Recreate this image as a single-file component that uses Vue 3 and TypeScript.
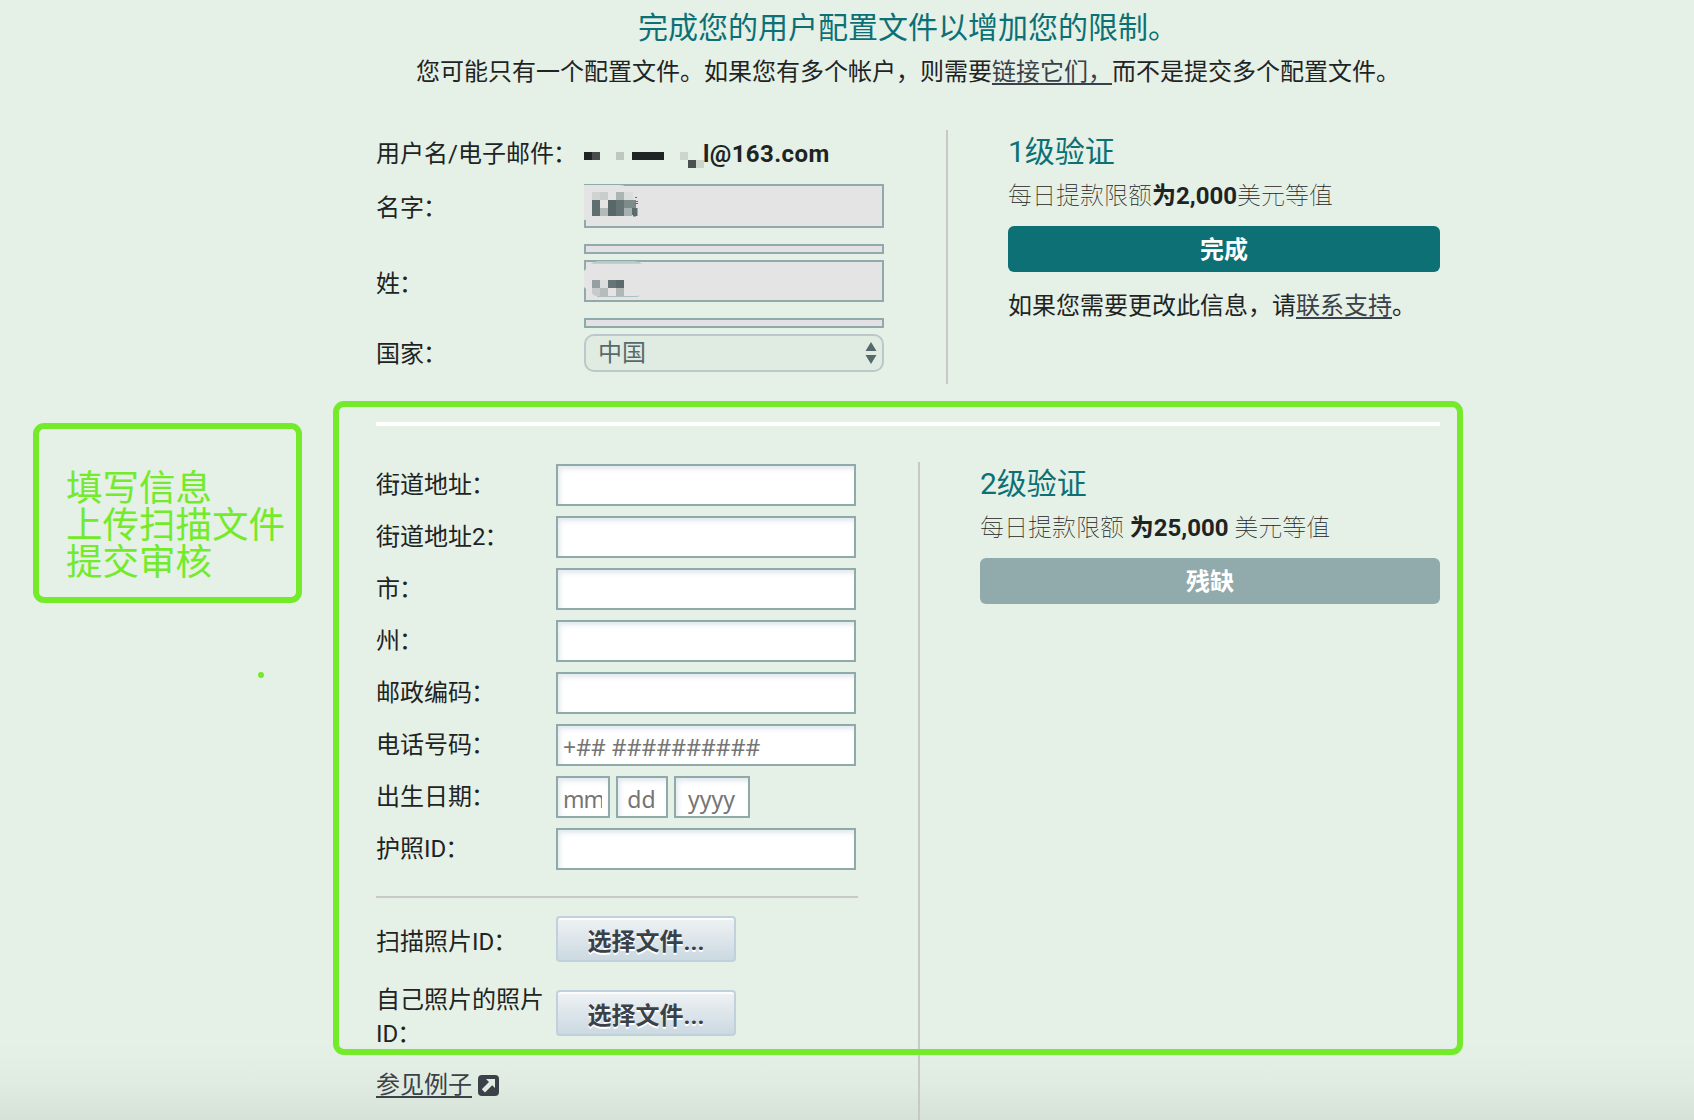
<script setup lang="ts">
interface Block {
  x: number
  y: number
  w: number
  h: number
  c: string
}

const b = (x: number, y: number, w: number, h: number, c: string): Block => ({ x, y, w, h, c })

// Redaction mosaics, relative to the value column and its row
const emailMask: Block[] = [
  b(0, 8, 8, 8, '#1e2424'), b(8, 8, 8, 8, '#484c4b'), b(32, 8, 8, 8, '#bec8c0'),
  b(48, 8, 32, 8, '#1e2424'), b(96, 8, 8, 8, '#ccd6ce'),
  b(104, 16, 8, 8, '#4a504d'), b(112, 16, 8, 8, '#ccd5cc'),
]
const firstMask: Block[] = [
  b(8, 8, 8, 8, '#d0d3d2'), b(16, 8, 8, 8, '#c9cdcc'), b(32, 8, 8, 8, '#adb4b4'), b(40, 8, 9, 8, '#dadddc'),
  b(8, 16, 8, 16, '#5f6f70'), b(24, 16, 8, 16, '#586869'), b(32, 16, 8, 16, '#657576'),
  b(40, 16, 12, 8, '#7e8b8b'), b(16, 24, 8, 8, '#b3bbba'), b(40, 24, 8, 8, '#a6b0b0'),
  b(48, 24, 4, 7, '#5c6c6e'), b(51, 13, 2, 1, '#5c6c6e'), b(52, 17, 2, 1, '#5c6c6e'),
  b(51, 19, 3, 1, '#5c6c6e'), b(52, 24, 1.5, 8, '#5c6c6e'), b(49, 31, 3, 1.5, '#5c6c6e'),
]
const lastMask: Block[] = [
  b(8, 20, 8, 8, '#97a0a0'), b(16, 20, 8, 8, '#dcdddd'), b(24, 20, 8, 8, '#667677'), b(32, 20, 8, 8, '#5c6c6e'),
  b(16, 28, 8, 8, '#b6bbbb'), b(32, 28, 8, 8, '#b0b7b6'),
]

const fields: string[] = ['街道地址', '街道地址2', '市', '州', '邮政编码']
const dateParts = [
  { hint: 'mm', cls: 'mm' },
  { hint: 'dd', cls: 'dd' },
  { hint: 'yyyy', cls: 'yyyy' },
]
</script>

<template>
  <div class="page">
    <main class="content">
      <header>
        <h1>完成您的用户配置文件以增加您的限制。</h1>
        <p class="intro">您可能只有一个配置文件。如果您有多个帐户，则需要<a>链接它们，</a>而不是提交多个配置文件。</p>
      </header>

      <section class="tier one">
        <div class="form">
          <div class="row email">
            <label>用户名/电子邮件<span class="colon">：</span></label>
            <div class="value">
              <b>l@163.com</b>
              <svg class="mask" width="124" height="28"><rect v-for="(m, i) in emailMask" :key="i" :x="m.x" :y="m.y" :width="m.w" :height="m.h" :fill="m.c" /></svg>
            </div>
          </div>
          <div class="row first">
            <label>名字<span class="colon">：</span></label>
            <div class="value">
              <div class="locked"></div>
              <svg class="mask" width="60" height="44">
                <path d="M0 1H36Q40 1 42 3V7H2V36H0Z" fill="#e4e4e4" />
                <rect v-for="(m, i) in firstMask" :key="i" :x="m.x" :y="m.y" :width="m.w" :height="m.h" :fill="m.c" />
              </svg>
            </div>
          </div>
          <div class="thin"></div>
          <div class="row last">
            <label>姓<span class="colon">：</span></label>
            <div class="value">
              <div class="locked"></div>
              <svg class="mask" width="64" height="42">
                <path d="M0 11Q2 9 2 9V29Q1 28 0 27Z" fill="#e4e4e4" />
                <path d="M7 3.7Q10 1 15 1H50Q55 1 58 3.7Z" fill="#b6cbc3" />
                <path d="M8 28H16V36H13Q9 36 8 33Z" fill="#c6cacb" />
                <path d="M13 36.5H50Q54 36.5 55 36" stroke="#afbfbf" fill="none" />
                <rect v-for="(m, i) in lastMask" :key="i" :x="m.x" :y="m.y" :width="m.w" :height="m.h" :fill="m.c" />
              </svg>
            </div>
          </div>
          <div class="thin second"></div>
          <div class="row country">
            <label>国家<span class="colon">：</span></label>
            <div class="select">
              <span>中国</span>
              <svg width="12" height="22"><path d="M6 0L11.5 9H.5ZM6 22L.5 13H11.5Z" fill="#58696b" /></svg>
            </div>
          </div>
        </div>
        <aside>
          <h2>1级验证</h2>
          <p class="limit">每日提款限额<b>为2,000</b>美元等值</p>
          <div class="status done">完成</div>
          <p class="note">如果您需要更改此信息，请<a>联系支持</a>。</p>
        </aside>
      </section>

      <hr class="rule" />

      <section class="tier two">
        <div class="form">
          <div v-for="f in fields" :key="f" class="row">
            <label>{{ f }}<span class="colon">：</span></label>
            <input type="text" />
          </div>
          <div class="row">
            <label>电话号码<span class="colon">：</span></label>
            <input type="text" placeholder="+## ##########" />
          </div>
          <div class="row">
            <label>出生日期<span class="colon">：</span></label>
            <div class="dates">
              <input v-for="d in dateParts" :key="d.cls" type="text" :class="d.cls" :placeholder="d.hint" />
            </div>
          </div>
          <div class="row">
            <label>护照ID<span class="colon">：</span></label>
            <input type="text" />
          </div>
          <hr class="sub" />
          <div class="row upload">
            <label>扫描照片ID<span class="colon">：</span></label>
            <button type="button">选择文件...</button>
          </div>
          <div class="row upload tall">
            <label>自己照片的照片ID<span class="colon">：</span></label>
            <button type="button">选择文件...</button>
          </div>
          <div class="example">
            <a>参见例子</a>
            <svg width="21" height="21" viewBox="0 0 21 21">
              <rect width="21" height="21" rx="4" fill="#3a4149" />
              <path d="M8 4H17V13L14.2 10.2L7 17.4L3.8 14.2L11 7Z" fill="#e3ece3" />
            </svg>
          </div>
        </div>
        <aside>
          <h2>2级验证</h2>
          <p class="limit">每日提款限额 <b>为25,000</b> 美元等值</p>
          <div class="status pending">残缺</div>
        </aside>
      </section>
    </main>

    <div class="highlight"></div>
    <div class="callout">填写信息<br />上传扫描文件<br />提交审核</div>
    <i class="dot"></i>
  </div>
</template>

<style>
body { margin: 0; overflow: hidden; }
</style>

<style scoped>
* { box-sizing: border-box; }
.page {
  position: relative;
  width: 1694px;
  height: 1120px;
  overflow: hidden;
  background: linear-gradient(to bottom, transparent 1040px, rgba(60, 80, 65, 0.03) 1085px, rgba(60, 80, 65, 0.09) 1120px), #e5f0e6;
  color: #1e2424;
  font: 400 24px/34px Roboto, "Noto Sans CJK SC", sans-serif;
}
.content { width: 1064px; margin-left: 376px; }
header { height: 130px; text-align: center; }
h1 { margin: 0; padding-top: 6px; font-size: 30px; line-height: 44px; font-weight: 400; color: #0c7075; }
p { margin: 0; white-space: nowrap; }
.intro { padding-top: 5px; }
a { color: #3a4149; text-decoration: underline; text-decoration-thickness: 2px; text-underline-offset: 3px; text-decoration-skip-ink: none; }
b { font-weight: 700; }
.colon { margin-left: -1px; }

.tier { display: flex; }
.tier .form { flex: none; border-right: 2px solid #c8c8c8; }
.one { height: 254px; }
.one .form { width: 572px; }
.one aside { width: 432px; margin-left: 60px; }
.row { display: flex; }
.row label { flex: none; }
.one label { width: 208px; white-space: nowrap; }
.value { position: relative; width: 300px; }
.mask { position: absolute; left: 0; top: 0; }
.email { height: 54px; }
.email label { padding-top: 7px; }
.email .value { padding: 7px 0 0 119px; }
.email b { letter-spacing: 0.4px; }
.email .mask { top: 14px; }
.locked { height: 100%; background: #e4e4e4; border: 2px solid #90a9ab; }
.first { height: 44px; line-height: 48px; margin-bottom: 16px; }
.last { height: 42px; line-height: 48px; margin-bottom: 16px; }
.thin { width: 300px; height: 10px; margin: 0 0 6px 208px; border: 2px solid #90a9ab; background: #e4e1e4; }
.country { line-height: 40px; }
.select {
  display: flex; align-items: center; justify-content: space-between;
  width: 300px; height: 38px; padding: 0 5px 0 12px;
  border: 2px solid #b8c8cc; border-radius: 10px; background: #e0ece1; color: #58696b;
}

h2 { margin: 0; height: 44px; line-height: 44px; font-size: 30px; font-weight: 400; color: #0c7075; }
.limit { height: 52px; line-height: 44px; font-weight: 100; }
.status { height: 46px; line-height: 48px; border-radius: 6px; color: #fff; font-weight: 700; text-align: center; }
.done { background: #0c7075; }
.pending { background: #91aaac; }
.note { padding-top: 17px; }

.rule { height: 4px; margin: 38px 0 36px; border: 0; background: #fff; }
.two { height: 658px; }
.two .form { width: 544px; padding-top: 2px; }
.two aside { width: 460px; margin-left: 60px; }
.two label { width: 180px; line-height: 43px; }
.two .row { height: 42px; margin-bottom: 10px; }
input {
  width: 300px; height: 42px; margin: 0; padding: 3px 6px 0 5px; outline: 0;
  border: 2px solid #90a9ab; border-radius: 0; background: #fff;
  box-shadow: inset 2px 3px 5px rgba(120, 155, 170, 0.22);
  font: 400 23px "Noto Sans", sans-serif; color: #1e2424;
}
input::placeholder { color: #757575; opacity: 1; }
.dates { display: flex; gap: 6px; }
.dates .mm { width: 54px; letter-spacing: -1px; }
.dates .dd { width: 52px; text-align: center; }
.dates .yyyy { width: 76px; text-align: center; }
.sub { width: 482px; height: 2px; margin: 26px 0 18px; border: 0; background: #c8c8c8; }
.two .upload { height: 46px; margin-bottom: 28px; }
.two .upload label { line-height: 52px; }
.two .upload.tall label { line-height: 34px; margin-top: -7px; padding-right: 10px; }
.upload button {
  width: 180px; height: 46px; padding: 6px 0 0; border: 2px solid #c0d1dc; border-radius: 4px;
  background: linear-gradient(#eff2f4, #cbd9e1); box-shadow: inset 0 2px 0 rgba(255, 255, 255, 0.8);
  color: #3a4149; font: 700 24px/36px Roboto, "Noto Sans CJK SC", sans-serif; text-shadow: 0 2px 0 #fff;
}
.example { display: flex; align-items: center; gap: 6px; height: 34px; margin-top: 32px; }

.highlight { position: absolute; left: 333px; top: 401px; width: 1130px; height: 654px; border: 6px solid #73ea2a; border-radius: 11px; }
.callout {
  position: absolute; left: 33px; top: 423px; width: 269px; height: 180px; padding: 41px 0 0 27px;
  border: 6px solid #73ea2a; border-radius: 11px; color: #73ea2a; font-size: 36.5px; line-height: 37px; white-space: nowrap;
}
.dot { position: absolute; left: 258px; top: 672px; width: 6px; height: 6px; border-radius: 50%; background: #73ea2a; }
</style>
